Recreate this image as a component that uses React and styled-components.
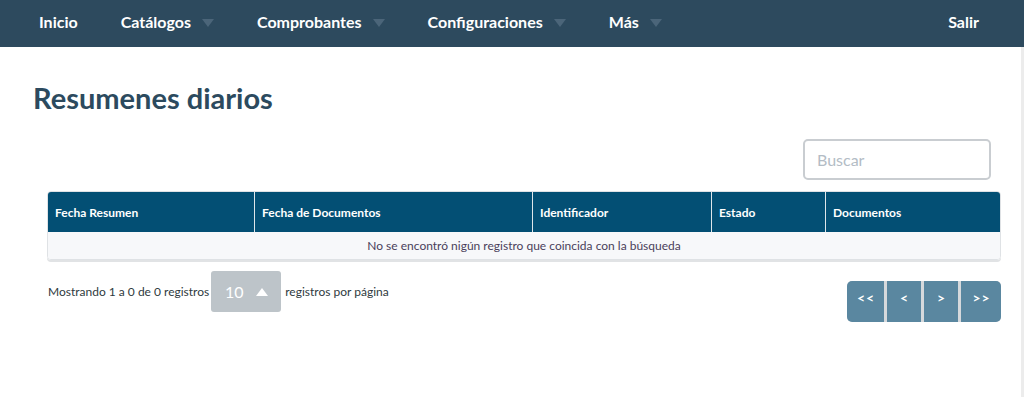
import styled, { createGlobalStyle } from "styled-components"

const GlobalStyle = createGlobalStyle`
  body {
    margin: 0;
    background: #fff;
    font-family: Lato, "Open Sans", sans-serif;
  }
`

const menu = [
  { label: "Inicio" },
  { label: "Catálogos", dropdown: true },
  { label: "Comprobantes", dropdown: true },
  { label: "Configuraciones", dropdown: true },
  { label: "Más", dropdown: true },
]

const columns = [
  { title: "Fecha Resumen", width: 206 },
  { title: "Fecha de Documentos", width: 278 },
  { title: "Identificador", width: 179 },
  { title: "Estado", width: 114 },
  { title: "Documentos" },
]

function App() {
  return (
    <>
      <GlobalStyle />
      <StyledNav>
        <StyledMenu>
          {menu.map((item) => (
            <StyledMenuItem key={item.label}>
              {item.label}
              {item.dropdown && <StyledCaret />}
            </StyledMenuItem>
          ))}
        </StyledMenu>
        <StyledMenuItem>Salir</StyledMenuItem>
      </StyledNav>

      <StyledPage>
        <StyledMain>
          <StyledTitle>Resumenes diarios</StyledTitle>

          <StyledToolbar>
            <StyledSearch placeholder="Buscar" />
          </StyledToolbar>

          <StyledTable>
            <thead>
              <tr>
                {columns.map((col) => (
                  <StyledTh key={col.title} style={col.width ? { width: col.width } : undefined}>
                    {col.title}
                  </StyledTh>
                ))}
              </tr>
            </thead>
            <tbody>
              <tr>
                <StyledEmpty colSpan={columns.length}>
                  No se encontró nigún registro que coincida con la búsqueda
                </StyledEmpty>
              </tr>
            </tbody>
          </StyledTable>

          <StyledFooter>
            <StyledInfo>
              Mostrando 1 a 0 de 0 registros
              <StyledPageSize>
                10 <StyledUpCaret />
              </StyledPageSize>
              registros por página
            </StyledInfo>
            <StyledPager>
              <StyledPageButton $wide>&lt;&lt;</StyledPageButton>
              <StyledPageButton>&lt;</StyledPageButton>
              <StyledPageButton>&gt;</StyledPageButton>
              <StyledPageButton $wide>&gt;&gt;</StyledPageButton>
            </StyledPager>
          </StyledFooter>
        </StyledMain>
        <StyledRail />
      </StyledPage>
    </>
  )
}

export default App

const StyledNav = styled.nav`
  display: flex;
  align-items: center;
  justify-content: space-between;
  height: 47px;
  padding: 0 45px 0 39px;
  background: #2d4a5e;
`

const StyledMenu = styled.ul`
  display: flex;
  align-items: center;
  gap: 43px;
  list-style: none;
  margin: 0;
  padding: 0;
`

const StyledMenuItem = styled.li`
  display: flex;
  align-items: center;
  list-style: none;
  color: #fff;
  font-size: 16px;
  font-weight: 700;
  margin-top: -5px;
`

const StyledCaret = styled.span`
  margin-left: 11px;
  margin-top: 3px;
  width: 0;
  height: 0;
  border-left: 6px solid transparent;
  border-right: 6px solid transparent;
  border-top: 8px solid #4b6579;
`

const StyledPage = styled.div`
  display: flex;
  min-height: 350px;
`

const StyledMain = styled.main`
  flex: 1;
  padding: 0 20px 0 33px;
`

const StyledTitle = styled.h1`
  margin: 33px 0 0;
  font-size: 29px;
  line-height: 35px;
  font-weight: 700;
  color: #2c4a5e;
`

const StyledToolbar = styled.div`
  display: flex;
  justify-content: flex-end;
  margin-top: 24px;
  padding-right: 10px;
`

const StyledSearch = styled.input`
  box-sizing: border-box;
  width: 188px;
  height: 41px;
  padding: 0 12px;
  border: 2px solid #c9cdd1;
  border-radius: 5px;
  font-family: Lato, sans-serif;
  font-size: 16px;
  color: #333;
  outline: none;

  &::placeholder {
    color: #b3bcc5;
  }
`

const StyledTable = styled.table`
  width: calc(100% - 14px);
  margin: 11px 0 0 14px;
  border-collapse: separate;
  border-spacing: 0;
  border: 1px solid #dfe2e5;
  border-radius: 4px;
  overflow: hidden;
  box-shadow: 0 2px 0 #e1e3e5;
  font-size: 12px;
`

const StyledTh = styled.th`
  box-sizing: border-box;
  height: 40px;
  padding: 0 7px;
  text-align: left;
  font-weight: 700;
  color: #fff;
  background: #034f74;
  border-left: 1px solid #dfe6ea;

  &:first-child {
    border-left: none;
  }
`

const StyledEmpty = styled.td`
  height: 27px;
  padding: 0;
  text-align: center;
  color: #4a3f5a;
  background: #f7f8fa;
`

const StyledFooter = styled.div`
  display: flex;
  justify-content: space-between;
  align-items: flex-start;
  margin: 11px 0 0 15px;
`

const StyledInfo = styled.div`
  display: flex;
  align-items: center;
  font-size: 12px;
  color: #2f3a40;
`

const StyledPageSize = styled.span`
  display: flex;
  align-items: center;
  justify-content: center;
  gap: 12px;
  width: 70px;
  height: 41px;
  margin: 0 4px 0 2px;
  border-radius: 3px;
  background: #bdc4c9;
  color: #fff;
  font-size: 16px;
`

const StyledUpCaret = styled.span`
  width: 0;
  height: 0;
  border-left: 6px solid transparent;
  border-right: 6px solid transparent;
  border-bottom: 8px solid #fff;
`

const StyledPager = styled.div`
  display: flex;
  gap: 3px;
  margin-top: 10px;
  background: #d6d9dc;
  border-radius: 5px;
  overflow: hidden;
`

const StyledPageButton = styled.button`
  width: ${(p) => (p.$wide ? "37px" : "34px")};
  height: 41px;
  padding: 0 0 8px 1px;
  border: none;
  background: #5a87a0;
  color: #fff;
  font-family: Lato, sans-serif;
  font-size: 14px;
  font-weight: 700;
  letter-spacing: 1px;

  &:last-child {
    width: 40px;
  }
`

const StyledRail = styled.div`
  width: 3px;
  background: #ececec;
`
